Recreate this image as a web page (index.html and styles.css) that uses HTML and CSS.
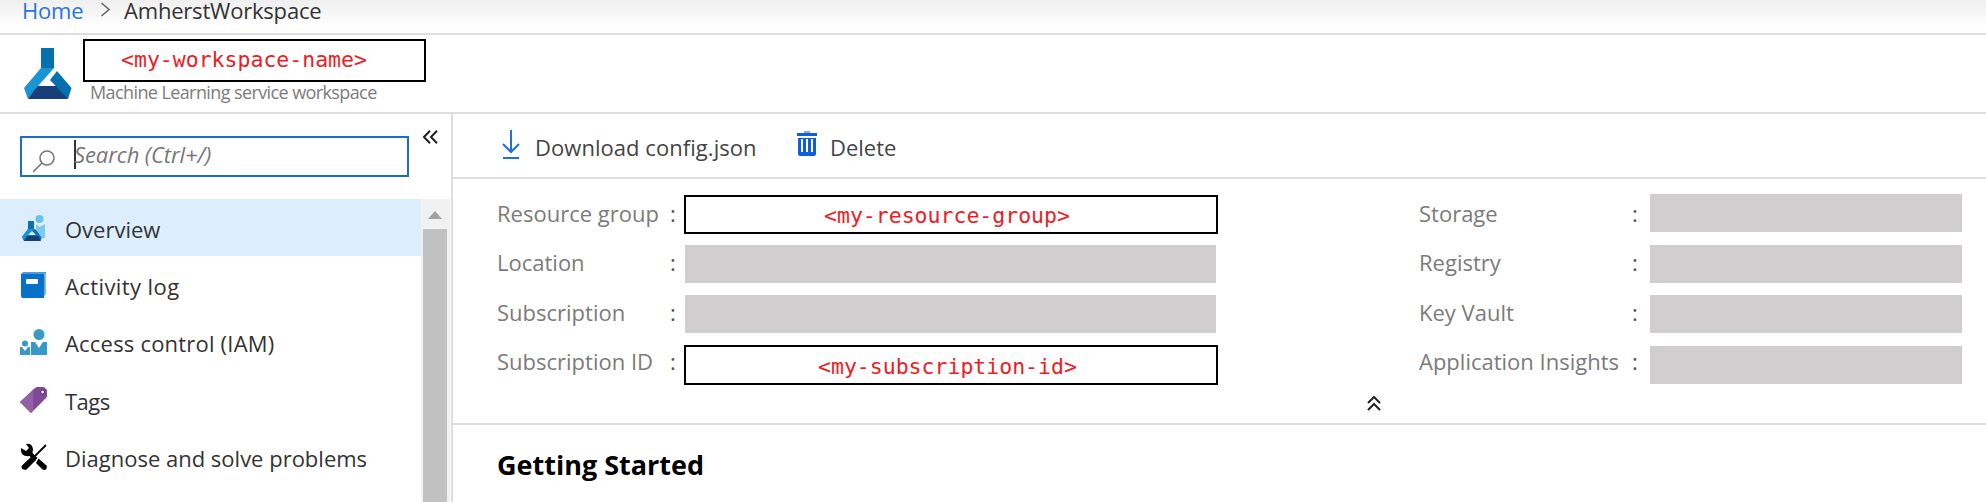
FILE: index.html
```
<!DOCTYPE html>
<html lang="en">
<head>
<meta charset="utf-8">
<title>AmherstWorkspace</title>
<link rel="stylesheet" href="styles.css">
</head>
<body>
<nav class="breadcrumb">
  <a class="home">Home</a>
  <svg class="crumb-sep" width="11" height="15" viewBox="0 0 11 15"><path d="M1.5 1L9 7.500L1.500 14" fill="none" stroke="#666" stroke-width="1.600"/></svg>
  <span class="crumb">AmherstWorkspace</span>
</nav>
<header class="title-bar">
  <svg class="logo" width="48" height="52" viewBox="0 0 48 52">
    <path d="M17 0h13v20H17z" fill="#0570ad"/>
    <path d="M11 38h26l7 13H4z" fill="#173f7a"/>
    <path d="M33 23l14.500 17L44 51L26 32z" fill="#0570ad"/>
    <path d="M17 20h13L10.500 42L4 51L0 40z" fill="#1795d4"/>
  </svg>
  <div class="titles">
    <div class="mask title-mask">&lt;my-workspace-name&gt;</div>
    <div class="subtitle">Machine Learning service workspace</div>
  </div>
</header>
<div class="body">
  <aside class="sidebar">
    <div class="search-row">
      <div class="search">
        <svg width="24" height="26" viewBox="0 0 24 26"><g fill="none" stroke="#777" stroke-width="1.600"><circle cx="14" cy="9" r="7"/><path d="M9 14L0 23"/></g></svg>
        <span class="caret"></span><span class="placeholder">Search (Ctrl+/)</span>
      </div>
      <svg class="collapse" width="15" height="14" viewBox="0 0 15 14"><path d="M7 .8L1 7l6 6.200M14 .8L8 7l6 6.200" fill="none" stroke="#222" stroke-width="2"/></svg>
    </div>
    <div class="menu-wrap">
      <ul class="menu">
        <li class="active">
          <svg width="28" height="28" viewBox="0 0 28 28"><path d="M8 7h6v8l3 1 5 8-2 3H4l-2-4 6-8z" fill="#0b6fb5"/><path d="M8 15L2 23l2 3 10-11z" fill="#1795d4"/><path d="M12 17l4 4H8z" fill="#dceefe"/><path d="M7 22h11l3 5H4z" fill="#173f7a"/><circle cx="19.500" cy="5" r="4" fill="#68c2ea"/><path d="M16 10l3.500 3 5.500-3v14h-3l-6-8z" fill="#7cc9ed"/></svg>
          <span class="t1">Overview</span></li>
        <li>
          <svg width="28" height="28" viewBox="0 0 28 28"><path d="M3 1h23v22l-2 2V3H1z" fill="#4d9bdc"/><path d="M24 3h1.200v21" fill="none" stroke="#b8d8f2" stroke-width=".8"/><path d="M1 3h23v24H3q-2 0-2-2z" fill="#0571c9"/><rect x="6" y="8" width="12" height="5" rx="1" fill="#fff"/></svg>
          <span class="t2">Activity log</span></li>
        <li>
          <svg width="28" height="28" viewBox="0 0 28 28"><g fill="#3899c6"><circle cx="19" cy="6.500" r="5.500"/><path d="M11 14h4l4 6 4-6h4v13H11z"/><circle cx="5" cy="15.500" r="3"/><path d="M0 19h2l3 4 3-4h2v8H0z"/></g></svg>
          <span class="t3">Access control (IAM)</span></li>
        <li>
          <svg width="28" height="28" viewBox="0 0 28 28"><path d="M0 16L15 2q1-1 3-1h6l3 3v6q0 1-1 2L11 27z" fill="#804998"/><path d="M0 16L13 4v21l-2 2z" fill="#9361a9"/><circle cx="22.500" cy="6" r="2" fill="#eee" stroke="#4d2861"/></svg>
          <span class="t4">Tags</span></li>
        <li>
          <svg width="28" height="28" viewBox="0 0 28 28"><path d="M6 1q6-1 7 5l-.5 4 5 5-3 3-5-5Q1 14 1 7V5l5 3 3-3z" fill="#000"/><path d="M26 2L15 13" stroke="#000" stroke-width="1.800"/><path d="M12 13l4 4L6 27l-4-1-.5-3z" fill="#000"/><path d="M18.500 15.500l8 7q1 3-1.500 4.500-2 0-3-1l-6-6z" fill="#000"/></svg>
          <span class="t5">Diagnose and solve problems</span></li>
      </ul>
      <div class="scrollbar"><svg width="14" height="8" viewBox="0 0 14 8"><path d="M0 8L7 0l7 8z" fill="#a2a2a2"/></svg><div class="thumb"></div></div>
    </div>
  </aside>
  <main class="main">
    <div class="toolbar">
      <svg class="dl" width="18" height="30" viewBox="0 0 18 30"><g fill="none" stroke="#1f6fe0" stroke-width="2"><path d="M9 0v22M1 14l8 8 8-8M1 28h16"/></g></svg>
      <span class="dl-text">Download config.json</span>
      <svg class="trash" width="20" height="25" viewBox="0 0 20 25"><path d="M7 0h6v3H7z" fill="#7eabef"/><path d="M0 2h20v3H0zM1 7h18v16q0 2-2 2H3q-2 0-2-2z" fill="#0f5fdc"/><path d="M5 8v13M10 8v13M15 8v13" stroke="#fff" stroke-width="2"/></svg>
      <span class="del-text">Delete</span>
    </div>
    <section class="essentials">
      <div class="col left">
        <div class="row"><span class="label">Resource group</span><span class="colon">:</span><div class="mask rg">&lt;my-resource-group&gt;</div></div>
        <div class="row"><span class="label">Location</span><span class="colon">:</span><div class="bar"></div></div>
        <div class="row"><span class="label">Subscription</span><span class="colon">:</span><div class="bar"></div></div>
        <div class="row"><span class="label">Subscription ID</span><span class="colon">:</span><div class="mask sid">&lt;my-subscription-id&gt;</div></div>
      </div>
      <div class="col right">
        <div class="row"><span class="label">Storage</span><span class="colon">:</span><div class="bar"></div></div>
        <div class="row"><span class="label">Registry</span><span class="colon">:</span><div class="bar"></div></div>
        <div class="row"><span class="label">Key Vault</span><span class="colon">:</span><div class="bar"></div></div>
        <div class="row"><span class="label">Application Insights</span><span class="colon">:</span><div class="bar"></div></div>
      </div>
      <svg class="fold" width="14" height="15" viewBox="0 0 14 15"><path d="M1 7l6-6 6 6M1 14l6-6 6 6" fill="none" stroke="#222" stroke-width="2"/></svg>
    </section>
    <h2 class="heading">Getting Started</h2>
  </main>
</div>
</body>
</html>
```
FILE: styles.css
```
* { box-sizing: border-box; }
body { margin: 0; width: 1986px; height: 502px; overflow: hidden; background: #fff; color: #333; font-family: "Open Sans", "Noto Sans", sans-serif; font-size: 22px; white-space: nowrap; }
svg { display: block; flex: none; }
.breadcrumb { display: flex; height: 35px; border-bottom: 2px solid #dedede; background: linear-gradient(#efefef, #fff 28px); padding-left: 22px; line-height: 20px; }
.home { width: 78px; color: #2b74d9; letter-spacing: -.2px; }
.crumb-sep { margin: 2px 13px 0 0; }
.crumb { letter-spacing: -.2px; }
.title-bar { display: flex; height: 79px; border-bottom: 2px solid #dedede; padding: 4px 0 0 24px; }
.logo { margin: 9px 11px 0 0; }
.mask { border: 2px solid #000; color: #ed1c24; background: #fff; font-family: "DejaVu Sans Mono", monospace; font-size: 21.500px; }
.title-mask { width: 343px; height: 43px; padding-left: 36px; line-height: 38px; }
.subtitle { padding-left: 7px; color: #7c7c7c; font-size: 18px; line-height: 20px; letter-spacing: -.6px; }
.body { display: flex; height: 388px; }
.sidebar { width: 453px; border-right: 2px solid #dedede; }
.search-row { display: flex; height: 85px; padding: 22px 0 0 20px; }
.search { display: flex; width: 389px; height: 41px; border: 2px solid #1b6ec2; padding: 2px 0 0 11px; color: #777; }
.search svg { margin-top: 9px; }
.caret { width: 2px; height: 29px; margin-left: 17px; background: #333; }
.placeholder { margin-left: -2px; font-style: italic; line-height: 29px; letter-spacing: -.1px; }
.collapse { margin: -6px 0 0 14px; }
.menu-wrap { display: flex; height: 303px; }
.menu { width: 421px; margin: 0; padding: 0; list-style: none; }
.menu li { display: flex; align-items: center; height: 57.300px; padding-left: 20px; }
.menu li svg { margin-right: 17px; }
.menu li span { padding-top: 2px; }
.menu .t2 { letter-spacing: .4px; }
.menu .t3 { letter-spacing: .2px; }
.menu .t4 { letter-spacing: -.5px; }
.menu .active { background: #dceefe; }
.scrollbar { display: flex; flex-direction: column; align-items: center; width: 29px; background: #f1f1f1; padding: 12px 3px 0 1px; }
.thumb { width: 24px; flex: 1; margin-top: 10px; background: #c1c1c1; }
.main { flex: 1; }
.toolbar { display: flex; height: 65px; border-bottom: 2px solid #dedede; padding-left: 49px; color: #444; line-height: 66px; }
.dl { margin-top: 16px; }
.dl-text { width: 277px; padding-left: 15px; letter-spacing: .05px; }
.trash { margin-top: 17px; }
.del-text { padding-left: 13px; }
.essentials { position: relative; display: flex; height: 246px; border-bottom: 2px solid #dedede; padding: 15px 0 0 44px; color: #7b7b7b; }
.col { display: flex; flex-direction: column; gap: 12.500px; }
.row { display: flex; height: 38px; line-height: 38px; }
.row:nth-child(2) { line-height: 34px; }
.row:nth-child(3) { line-height: 34px; }
.row:nth-child(4) { line-height: 30px; }
.colon { color: #555; }
.left { width: 922px; }
.left .label { width: 173px; }
.left .colon { width: 15px; }
.right .label { width: 213px; }
.right .colon { width: 18px; }
.bar { height: 38px; background: #d0cece; }
.left .bar { width: 531px; }
.right .bar { width: 312px; }
.left .mask { width: 534px; height: 40px; margin-left: -1px; line-height: 37px; }
.left .rg { height: 39px; margin-top: 1px; padding-left: 138px; }
.left .sid { margin-top: -1px; padding-left: 132px; line-height: 39px; }
.fold { position: absolute; left: 914px; top: 217px; }
.heading { margin: 0; padding-left: 44px; font-size: 27px; line-height: 79px; font-weight: 700; color: #000; }
```
